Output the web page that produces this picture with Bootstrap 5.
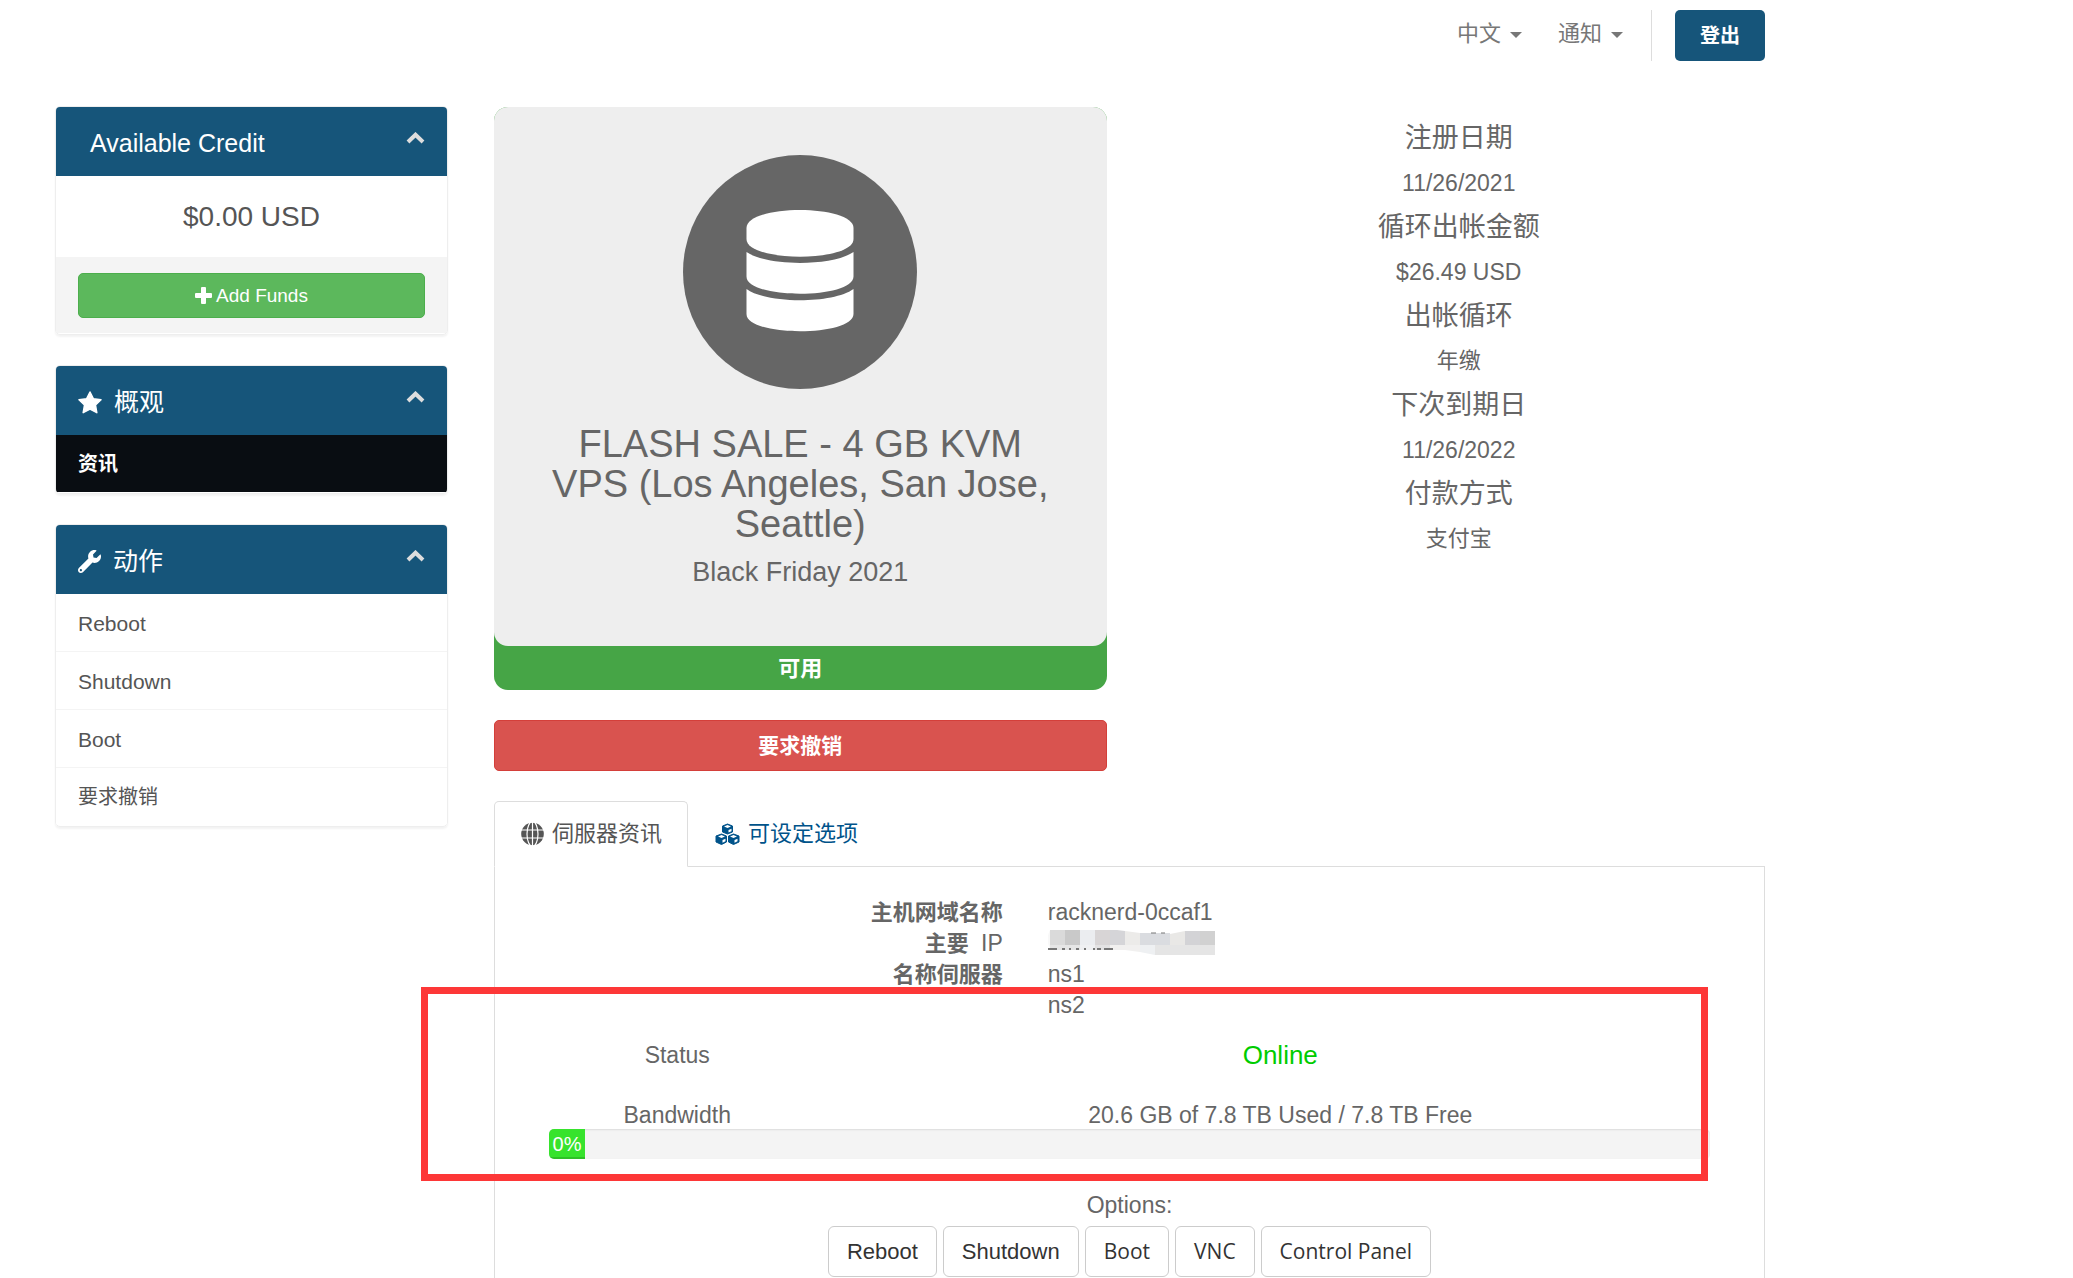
<!DOCTYPE html>
<html lang="zh">
<head>
<meta charset="utf-8">
<meta name="viewport" content="width=device-width, initial-scale=1">
<title>Product details</title>
<link rel="stylesheet" href="https://cdn.jsdelivr.net/npm/bootstrap@5.3.0/dist/css/bootstrap.min.css">
<style>
:root{--brand:#16557a;--ink:#666;--side-ink:#555}
body{font-family:"Liberation Sans","Noto Sans CJK SC",sans-serif;font-size:23px;line-height:31px;color:var(--ink);background:#fff;overflow-x:hidden}
.page-wrap{padding-left:55px;padding-right:308px}
.page-row{--bs-gutter-x:46px}
.topbar{height:106px;padding-top:10px}
.topbar nav{gap:36px}
.topbar .nav-link{font-size:22px;line-height:30px;color:#777;padding:9px 0 8px}
.topbar .dropdown-toggle::after{border-top:6px solid;border-left:6px solid transparent;border-right:6px solid transparent;margin-left:9px;vertical-align:3px}
.topbar .vr-line{width:1px;height:51px;background:#ddd;margin:0 23px 0 28px}
.btn-brand,.btn-brand:hover{background:var(--brand);border:0;color:#fff;font-size:20px;font-weight:700;line-height:49px;padding:2px 25px 0;border-radius:5px}
.side-card{border:1px solid #eee;border-radius:5px;margin-bottom:30px;padding-bottom:1px;box-shadow:0 2px 2px rgba(0,0,0,.05);overflow:hidden}
.side-head{background:var(--brand);color:#fff;font-size:25px;height:69px;padding:3px 22px 0}
.side-head.side-indent{padding-left:34px}
.side-head .chev{margin-top:-10px}
.side-head .side-title{margin-left:12px}
.credit{font-size:28px;line-height:81px;color:var(--side-ink)}
.side-foot{background:#f4f4f4;padding:16px 22px 15px}
.btn-add,.btn-add:hover{background:#5cb85c;border:1px solid #4cae4c;color:#fff;font-size:19px;line-height:43px;padding:0;border-radius:5px}
.side-card .list-group-item{font-size:21px;line-height:55px;padding:2px 22px 0;color:var(--side-ink);border-color:#f4f4f4}
.side-card .list-group-item.item-cjk{font-size:20px}
.side-card .list-group-item.active{background:#090d12;color:#fff;font-weight:700;border:0}
.main-col{padding-top:1px}
.product-status{background:#46a546;border-radius:14px;color:#fff;margin-bottom:30px}
.product-box{background:#eee;border-radius:14px;color:var(--ink);padding:48px 56px 59px}
.product-box h1{font-size:38px;line-height:40px;font-weight:400;margin:35px 0 13px}
.product-box h2{font-size:27px;line-height:30px;font-weight:400;margin:0}
.state-text{font-size:22px;font-weight:700;line-height:42px;padding-top:2px}
.btn-cancel,.btn-cancel:hover{background:#d9534f;border:1px solid #d43f3a;color:#fff;font-size:21px;font-weight:700;line-height:49px;padding:0;border-radius:5px}
.facts{padding-top:9px;margin:0}
.facts dt{font-size:27px;font-weight:400;line-height:45px}
.facts dd{line-height:44px;margin:0}
.facts .cjk{font-size:22px}
.server-tabs{margin-top:30px;border-color:#ddd}
.server-tabs .nav-link{font-size:22px;line-height:32px;padding:16px 25px 16px 26px;color:#00538a;border-radius:5px 5px 0 0}
.server-tabs .nav-link.active{color:var(--side-ink);border-color:#ddd #ddd #fff}
.server-tabs svg{margin-right:8px}
.server-pane{border:1px solid #ddd;border-width:0 1px;padding:30px 54px 2px}
.server-pane .row{--bs-gutter-x:45px}
.server-pane .spec-row{margin:0 -45px 20px}
.spec-row dt{font-size:22px;font-weight:700;line-height:31px}
.spec-row .lat{font-size:23px;font-weight:400}
.spec-row dd{margin:0}
.usage-row{line-height:28px}
.usage-row + .usage-row{margin-top:32px}
.usage-row .online{font-size:26px;color:#0c0}
.bw{height:30px;background:#f4f4f4;border-radius:5px;box-shadow:inset 0 1px 2px rgba(0,0,0,.1);margin-bottom:31px}
.bw .progress-bar{background:#37e32d;font-size:20px;line-height:30px;min-width:36px;box-shadow:inset 0 -2px 0 rgba(0,0,0,.15)}
.opt-bar{gap:6px;padding-top:5px}
.btn-opt{background:#fff;border:1px solid #ccc;border-radius:6px;color:#333;font-size:22px;line-height:49px;padding:0 18px}
.btn-opt.alt{font-family:"Open Sans",sans-serif;font-size:21px}
.highlight-box{position:absolute;left:-74px;right:56px;top:120px;height:194px;border:7px solid #fd3737;pointer-events:none}
</style>
<script defer src="https://cdn.jsdelivr.net/npm/bootstrap@5.3.0/dist/js/bootstrap.bundle.min.js"></script>
</head>
<body>
<svg class="d-none">
  <symbol id="chev" viewBox="0 0 19 12"><path d="M2 10L9.500 2.700L17 10" fill="none" stroke="#ddd" stroke-width="4"/></symbol>
</svg>
<div class="page-wrap">
  <header class="topbar d-flex justify-content-end">
    <nav class="d-flex" aria-label="Account">
      <a class="nav-link dropdown-toggle" href="#">中文</a>
      <a class="nav-link dropdown-toggle" href="#">通知</a>
    </nav>
    <div class="vr-line"></div>
    <div><button type="button" class="btn btn-brand">登出</button></div>
  </header>
  <div class="row page-row">
    <aside class="col-3">
      <section class="side-card">
        <div class="side-head side-indent d-flex justify-content-between align-items-center"><span>Available Credit</span><svg class="chev" width="19" height="12"><use href="#chev"/></svg></div>
        <div class="credit text-center">$0.00 USD</div>
        <div class="side-foot"><button type="button" class="btn btn-add w-100 d-flex justify-content-center align-items-center gap-1"><svg width="17" height="17" viewBox="0 0 17 17" fill="#fff"><path d="M7 0h3q1 0 1 1v5h5q1 0 1 1v3q0 1-1 1h-5v5q0 1-1 1H7q-1 0-1-1v-5H1q-1 0-1-1V7q0-1 1-1h5V1q0-1 1-1z"/></svg>Add Funds</button></div>
      </section>
      <section class="side-card">
        <div class="side-head d-flex align-items-center"><svg width="24" height="23" viewBox="0 0 24 23" fill="#fff" stroke="#fff" stroke-width="1.500" stroke-linejoin="round"><path d="M12 1l3.300 6.700 7.700 1.100-5.500 5.200 1.300 7.700L12 18.200l-6.800 3.500L6.500 14 1 8.800l7.700-1.100z"/></svg><span class="side-title flex-grow-1">概观</span><svg class="chev" width="19" height="12"><use href="#chev"/></svg></div>
        <div class="list-group list-group-flush"><a class="list-group-item item-cjk active" href="#">资讯</a></div>
      </section>
      <section class="side-card">
        <div class="side-head d-flex align-items-center"><svg width="23" height="23" viewBox="0 0 512 512" fill="#fff"><path d="M507.700 109.100c-2.200-9-13.500-12.100-20.100-5.500l-74.400 74.400-67.900-11.300L334 98.900l74.400-74.400c6.600-6.600 3.400-17.900-5.700-20.200-47.400-11.700-99.600.9-136.600 37.900-39.600 39.600-50.500 97.100-34.100 147.200L18.700 402.800c-25 25-25 65.500 0 90.500s65.500 25 90.500 0l213.200-213.200c50.100 16.700 107.500 5.700 147.400-34.200 37.100-37.100 49.700-89.300 37.900-136.800zM64 472c-13.200 0-24-10.800-24-24 0-13.300 10.700-24 24-24s24 10.700 24 24c0 13.200-10.700 24-24 24z"/></svg><span class="side-title flex-grow-1">动作</span><svg class="chev" width="19" height="12"><use href="#chev"/></svg></div>
        <div class="list-group list-group-flush">
          <a class="list-group-item" href="#">Reboot</a>
          <a class="list-group-item" href="#">Shutdown</a>
          <a class="list-group-item" href="#">Boot</a>
          <a class="list-group-item item-cjk" href="#">要求撤销</a>
        </div>
      </section>
    </aside>
    <main class="col-9 main-col">
      <div class="row page-row">
        <div class="col-6">
          <div class="product-status text-center">
            <div class="product-box">
              <svg class="d-block mx-auto" width="234" height="234" viewBox="0 0 234 234"><circle cx="117" cy="117" r="117" fill="#666"/><g fill="#fff"><path d="M63.500 73C63.500 49 170.500 49 170.500 73V84C170.500 107.500 63.500 107.500 63.500 84Z"/><path d="M63.500 97C84 111.500 150 111.500 170.500 97V121.500C170.500 144.500 63.500 144.500 63.500 121.500Z"/><path d="M63.500 134C84 149 150 149 170.500 134V159C170.500 182 63.500 182 63.500 159Z"/></g></svg>
              <h1>FLASH SALE - 4 GB KVM VPS (Los Angeles, San Jose, Seattle)</h1>
              <h2>Black Friday 2021</h2>
            </div>
            <div class="state-text">可用</div>
          </div>
          <button type="button" class="btn btn-cancel w-100 d-block">要求撤销</button>
        </div>
        <div class="col-6">
          <dl class="facts text-center">
            <dt>注册日期</dt><dd>11/26/2021</dd>
            <dt>循环出帐金额</dt><dd>$26.49 USD</dd>
            <dt>出帐循环</dt><dd class="cjk">年缴</dd>
            <dt>下次到期日</dt><dd>11/26/2022</dd>
            <dt>付款方式</dt><dd class="cjk">支付宝</dd>
          </dl>
        </div>
      </div>
      <ul class="nav nav-tabs server-tabs">
        <li class="nav-item"><a class="nav-link active d-flex align-items-center" href="#"><svg width="23" height="24" viewBox="0 0 23 24"><circle cx="11.500" cy="12" r="11.300" fill="#555"/><g fill="none" stroke="#fff" stroke-width="1.200"><ellipse cx="11.500" cy="12" rx="5.500" ry="12.500"/><path d="M11.500 0v24M0 8h23M0 16h23"/></g></svg>伺服器资讯</a></li>
        <li class="nav-item"><a class="nav-link d-flex align-items-center" href="#"><svg width="25" height="24" viewBox="0 0 25 24"><g fill="#00538a" stroke="#00538a" stroke-linejoin="round"><path d="M12.500 2l5 2v6l-5 2-5-2V4z"/><path d="M6.500 12l5 2v6l-5 2.500-5.500-2.500v-6z"/><path d="M18.500 12l5.500 2v6l-5.500 2.500-5-2.500v-6z"/></g><g fill="#fff"><path d="M12.500 3l3.500 1.500-3.500 1.400L9 4.500zM6.500 13l3.500 1.500-3.500 1.400L3 14.500zM18.500 13l3.500 1.500-3.500 1.400L15 14.500z"/><path d="M13.500 8l3-1.300v2.500l-3 1.400zM7.500 18l3-1.300v2.500l-3 1.600zM19.500 18l3-1.300v2.500l-3 1.600z"/></g></svg>可设定选项</a></li>
      </ul>
      <section class="server-pane position-relative">
        <dl class="row spec-row">
          <dt class="col-5 text-end">主机网域名称</dt><dd class="col-7">racknerd-0ccaf1</dd>
          <dt class="col-5 text-end">主要&nbsp; <span class="lat">IP</span></dt>
          <dd class="col-7"><svg class="d-block" width="170" height="28" viewBox="0 0 170 28" role="img" aria-label="Hidden address">
            <path d="M2 2Q-3 12 2 20z" fill="#f8f8f8"/>
            <g><path d="M2 2h15v15H2z" fill="#dadada"/><path d="M17 2h15v15H17z" fill="#c9c9c9"/><path d="M32 2h15v15H32z" fill="#ebedf0"/><path d="M47 2h15v15H47z" fill="#d8d5d6"/><path d="M62 2h7l8 1v14H62z" fill="#d5d5d8"/><path d="M77 3l15 2v12H77z" fill="#ecebe9"/><path d="M92 5h30v12H92z" fill="#dadce0"/><path d="M122 6l15-3v14h-15z" fill="#e9e8e6"/><path d="M137 3h15v14h-15z" fill="#d3d3d6"/><path d="M152 3h15v14h-15z" fill="#d1d1d1"/></g>
            <path d="M2 17h30v5H2z" fill="#e6e6e6"/><path d="M32 17h15v5H32z" fill="#eff0f2"/><path d="M47 17h15v5H47z" fill="#e3e2e3"/><path d="M62 17h30v7l-15-2H62z" fill="#f1f0ef"/><path d="M92 17h15v10l-15-3z" fill="#eef0f2"/><path d="M107 17h60v10h-60z" fill="#e5e5e5"/>
            <path d="M0 21h9M14 21h3M21 21h2M28 21h3M36 21h2M45 21h2M49 21h4M56 21h9" stroke="#777" stroke-width="2"/><path d="M103 5h5M113 5h4" stroke="#777"/></svg></dd>
          <dt class="col-5 text-end">名称伺服器</dt><dd class="col-7">ns1<br>ns2</dd>
        </dl>
        <div class="row usage-row text-center"><div class="col-3">Status</div><div class="col-9 online">Online</div></div>
        <div class="row usage-row text-center"><div class="col-3">Bandwidth</div><div class="col-9">20.6 GB of 7.8 TB Used / 7.8 TB Free</div></div>
        <div class="progress bw" role="progressbar" aria-label="Bandwidth" aria-valuenow="0" aria-valuemin="0" aria-valuemax="100"><div class="progress-bar" style="width:0%">0%</div></div>
        <div class="text-center">Options:</div>
        <div class="d-flex justify-content-center opt-bar">
          <button type="button" class="btn btn-opt">Reboot</button>
          <button type="button" class="btn btn-opt">Shutdown</button>
          <button type="button" class="btn btn-opt alt">Boot</button>
          <button type="button" class="btn btn-opt alt">VNC</button>
          <button type="button" class="btn btn-opt alt">Control Panel</button>
        </div>
        <div class="highlight-box"></div>
      </section>
    </main>
  </div>
</div>
</body>
</html>
